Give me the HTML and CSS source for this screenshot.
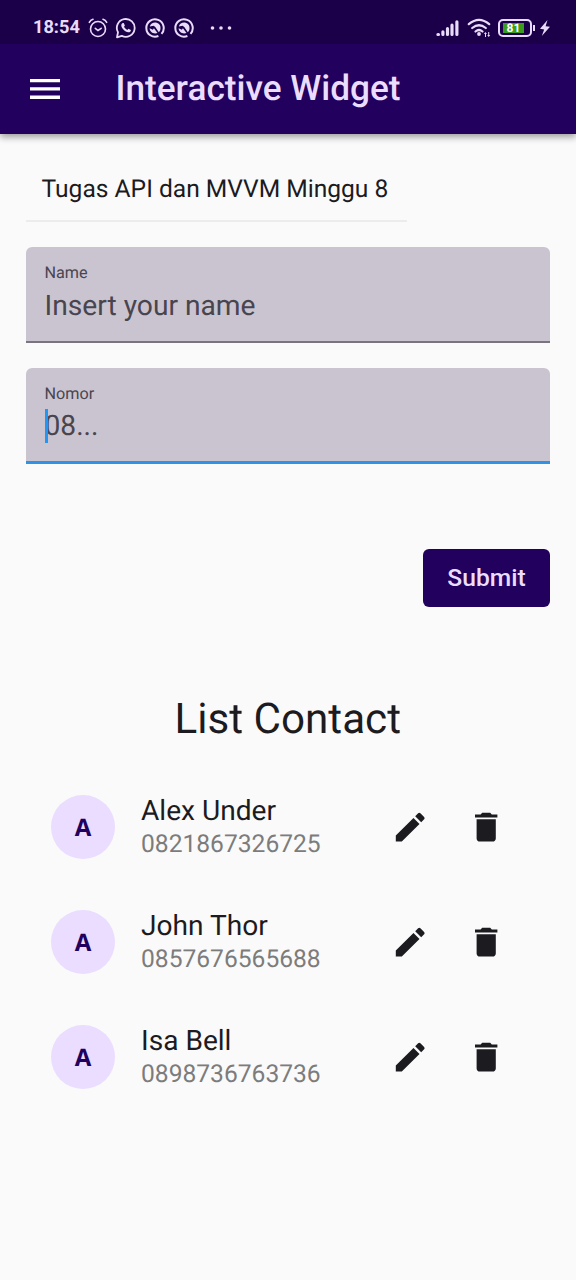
FILE: index.html
```html
<!DOCTYPE html>
<html lang="id">
<head>
<meta charset="utf-8">
<title>Interactive Widget</title>
<link rel="stylesheet" href="styles.css">
</head>
<body>
<svg class="defs" width="0" height="0">
  <symbol id="pencil" viewBox="0 0 24 24"><path d="M3 17.25V21h3.75L17.81 9.94l-3.75-3.75L3 17.25zM20.71 7.04a1 1 0 0 0 0-1.41l-2.34-2.34a1 1 0 0 0-1.41 0l-1.83 1.83 3.75 3.75 1.83-1.83z"/></symbol>
  <symbol id="trash" viewBox="0 0 24 24"><path d="M6 19c0 1.1.9 2 2 2h8c1.1 0 2-.9 2-2V7H6v12zM19 4h-3.5l-1-1h-5l-1 1H5v2h14V4z"/></symbol>
  <symbol id="swirl" viewBox="0 0 20 20">
    <path d="M13.400 18A8.700 8.700 0 1 1 16.500 15.800" fill="none" stroke="currentColor" stroke-width="2"/>
    <path d="M4.800 8.500C5.500 5.800 8 4.300 10.600 4.500c3.200.3 5.200 3 4.900 6-.1 1.600-.8 2.900-1.700 3.800L10.300 8.900 8.600 7.800z"/>
    <path d="M4.600 10.300l3.300 1.400 1-1.500 3.600 4.800c-3.600 1.500-7.600-.6-7.900-4.700z"/>
  </symbol>
</svg>
<header>
  <div class="status">
    <span class="clock">18:54</span>
    <svg class="alarm" viewBox="0 0 20 20"><g fill="none" stroke="currentColor" stroke-width="1.600" stroke-linecap="round"><circle cx="10" cy="11" r="7.500"/><path d="M1.300 4.300Q2.500 2 5 1.300M18.700 4.300Q17.500 2 15 1.300M7.300 10.300l2.700 2.200 3.200-2.200"/></g></svg>
    <svg class="chat" viewBox="0 0 22 22"><path d="M2 20.300l1-5A8.900 8.900 0 1 1 6.800 18.900z" fill="none" stroke="currentColor" stroke-width="1.800" stroke-linejoin="round"/><path d="M7.700 6.100l1-.1 1.200 2.600-.9 1.200c.8 1.500 1.800 2.400 3.300 3.100l1.100-1.200 2.500 1.200c.1 1.600-1.200 2.500-2.600 2.400-3.400-.4-6.700-3.700-7-6.700-.1-1.100.5-2.100 1.400-2.500z"/></svg>
    <svg class="app"><use href="#swirl"/></svg>
    <svg class="app"><use href="#swirl"/></svg>
    <svg class="more" viewBox="0 0 22 6"><circle cx="2.500" cy="3" r="1.800"/><circle cx="11" cy="3" r="1.800"/><circle cx="19.500" cy="3" r="1.800"/></svg>
    <svg class="signal" viewBox="0 0 24 18"><g fill="none" stroke="currentColor" stroke-width="3.300" stroke-linecap="round"><path d="M2 15.800h.6M7.200 13v2.800M12 9.700v6.100M16.700 6v9.800M21.800 2.500v13.300"/></g></svg>
    <svg class="wifi" viewBox="0 0 24 20"><g fill="none" stroke="currentColor" stroke-width="2.200" stroke-linecap="round"><path d="M1.800 6.200Q12-2.500 22.200 6.200M5.200 10Q12 4.500 18.800 10M8.500 13.500Q12 10.500 15.500 13.500"/></g><circle cx="12" cy="16" r="1.900"/><path d="M18.300 14l1.700 2h-1v3h-1v-3h-1zM21.700 19l-1.500-2h1v-3h1v3h1z"/></svg>
    <span class="battery"><span class="charge">81</span></span>
    <svg class="bolt" viewBox="0 0 10 16"><path d="M7.500 0L0 8.700l4.200.7L1.800 16 10 6.800l-4.400-.6z"/></svg>
  </div>
  <div class="appbar">
    <svg class="menu" viewBox="0 0 30 20"><path d="M0 0h30v3.300H0zM0 8.300h30v3.300H0zM0 16.600h30V20H0z"/></svg>
    <h1>Interactive Widget</h1>
  </div>
</header>
<main>
  <div class="caption"><span>Tugas API dan MVVM Minggu 8</span></div>
  <div class="field">
    <label>Name</label>
    <div class="hint"><span>Insert your name</span></div>
  </div>
  <div class="field active">
    <label>Nomor</label>
    <div class="hint"><i class="caret"></i><span>08...</span></div>
  </div>
  <button class="submit">Submit</button>
  <h2>List Contact</h2>
  <ul>
    <li><span class="avatar">A</span><div class="who"><div class="name">Alex Under</div><div class="phone">0821867326725</div></div><svg class="edit"><use href="#pencil"/></svg><svg class="delete"><use href="#trash"/></svg></li>
    <li><span class="avatar">A</span><div class="who"><div class="name">John Thor</div><div class="phone">0857676565688</div></div><svg class="edit"><use href="#pencil"/></svg><svg class="delete"><use href="#trash"/></svg></li>
    <li><span class="avatar">A</span><div class="who"><div class="name">Isa Bell</div><div class="phone">0898736763736</div></div><svg class="edit"><use href="#pencil"/></svg><svg class="delete"><use href="#trash"/></svg></li>
  </ul>
</main>
</body>
</html>
```
FILE: styles.css
```css
* { box-sizing: border-box; }
body { margin: 0; min-height: 1280px; background: #fafafa; color: #1c1b1f; font-family: Roboto, sans-serif; text-rendering: geometricPrecision; }
svg { fill: currentColor; flex: none; display: block; }
.defs { position: absolute; }
header { height: 133.5px; background: #22005d; box-shadow: 0 3px 7px rgba(0,0,0,.38); }
.status { height: 44px; padding: 12px 26px 0 33px; display: flex; align-items: center; background: #1b0049; color: #e9dcf8; }
.clock { width: 55px; font-size: 18.200px; font-weight: 700; line-height: 32px; }
.alarm { width: 20px; height: 20px; margin-right: 7px; }
.chat { width: 22px; height: 22px; margin-right: 8px; }
.app { width: 20px; height: 20px; margin-right: 9px; }
.more { width: 22px; height: 6px; margin-left: 7px; }
.signal { width: 23px; height: 18px; margin-left: auto; margin-right: 8px; }
.wifi { width: 24px; height: 20px; margin-right: 7px; }
.battery { position: relative; width: 34px; height: 18px; padding: 2px 3px; border: 2px solid #e9dcf8; border-radius: 5px; margin-right: 8px; }
.battery::after { content: ""; position: absolute; left: 33px; top: 4px; width: 2px; height: 6px; background: #e9dcf8; }
.charge { display: block; width: 21px; height: 10px; background: #3a9d20; color: #fff; font-size: 12px; font-weight: 700; line-height: 10px; text-align: center; }
.bolt { width: 10px; height: 16px; }
.appbar { height: 89px; display: flex; align-items: center; padding-left: 30px; color: #fff; }
.menu { width: 30px; height: 20px; margin-right: 55.500px; }
h1 { margin: 0; color: #eaddff; font-size: 35.2px; font-weight: 500; line-height: 45px; white-space: nowrap; }
main { padding: 22.500px 26px 0 25.500px; }
.caption { width: 381.500px; height: 66px; padding: 17px 0 0 16px; border-bottom: 2px solid #ececec; font-size: 24.600px; line-height: 34px; white-space: nowrap; }
.field { height: 96px; margin-top: 25px; padding: 15px 19px 0; background: #cac4d0; border-radius: 6px 6px 0 0; border-bottom: 2px solid #79747e; color: #49454f; }
.field label { display: block; height: 22px; font-size: 16.200px; line-height: 22px; }
.field.active { margin-top: 25px; border-bottom: 3px solid #2f92e4; }
.hint { position: relative; height: 34px; margin-top: 4px; font-size: 28.200px; line-height: 34px; }
.field:not(.active) .hint { margin-top: 5px; }
.caret { position: absolute; left: 0; top: 0; width: 3px; height: 34px; background: #2196f3; }
.submit { display: block; width: 127px; height: 58px; margin: 85px 0 0 auto; padding: 0 0 2px; border: 0; border-radius: 6px; background: #22005d; color: #eaddff; font: 500 24.600px Roboto, sans-serif; }
h2 { margin: 85px 0 0; font-size: 42.200px; font-weight: 400; line-height: 56px; text-align: center; }
ul { list-style: none; margin: 21px 0 0; padding: 0; }
li { height: 115px; display: flex; align-items: center; padding-left: 25.500px; }
.avatar { width: 64px; height: 64px; border-radius: 50%; background: #eaddff; color: #22005d; font: 700 24px/66px "Open Sans", sans-serif; text-align: center; }
.who { width: 246px; margin-left: 26px; }
.name { font-size: 28.100px; line-height: 34px; }
.phone { color: #7c7c7c; font-size: 24.600px; line-height: 34px; margin-bottom: -2px; }
.edit, .delete { width: 38.400px; height: 38.400px; margin-top: 2px; }
.edit { margin-left: 3.800px; }
.delete { margin-left: 38.200px; }
```
